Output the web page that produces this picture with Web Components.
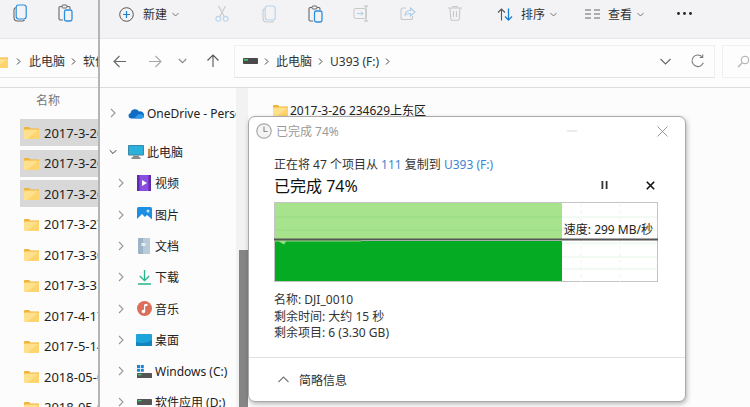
<!DOCTYPE html>
<html lang="zh">
<head>
<meta charset="utf-8">
<title>已完成 74%</title>
<style>
    html,body{margin:0;height:100%;overflow:hidden;background:#fbfbfb;}
    body{
        font-family:"Noto Sans","Noto Sans CJK SC",sans-serif;
        font-size:12px;
        color:#222;
    }
    .desk{position:relative;width:750px;height:407px;overflow:hidden;}
    back-window{position:absolute;left:0;top:0;}
    front-window{position:absolute;left:98px;top:0;}
    copy-dialog{position:absolute;left:248px;top:116px;}
</style>
</head>
<body>
<div class="desk">
    <back-window></back-window>
    <front-window></front-window>
    <copy-dialog></copy-dialog>
</div>

<script>
const ikonit={
    folder:`<svg width="15" height="13" viewBox="0 0 15 13"><path d="M0 2.200C0 1.500.5 1 1.200 1H5l1.500 1.500H15V5H0z" fill="#f2b436"/><rect y="3.400" width="15" height="9.600" rx=".8" fill="#ffe08c"/><path d="M15 3.400V13H3z" fill="#fbcb58" opacity=".6"/></svg>`,
    copy:`<svg width="14" height="18" viewBox="0 0 14 18" fill="none"><rect x="3.200" y="1" width="10" height="14" rx="2.400" stroke="#2a8fe0" stroke-width="1.200"/><path d="M2.600 3.500C1.500 4 1 4.800 1 6v7.500C1 15.600 2.400 17 4.500 17h5c.9 0 1.600-.4 2-1" stroke="#666" stroke-width="1.100"/></svg>`,
    copyPale:`<svg width="14" height="18" viewBox="0 0 14 18" fill="none"><rect x="3.200" y="1" width="10" height="14" rx="2.400" stroke="#b9d6ee" stroke-width="1.200"/><path d="M2.600 3.500C1.500 4 1 4.800 1 6v7.500C1 15.600 2.400 17 4.500 17h5c.9 0 1.600-.4 2-1" stroke="#c8c8c8" stroke-width="1.100"/></svg>`,
    paste:`<svg width="15" height="18" viewBox="0 0 15 18" fill="none"><path d="M4 2.500H2.200C1.500 2.500 1 3 1 3.700v11.100c0 .7.500 1.200 1.200 1.200H5" stroke="#666" stroke-width="1.100"/><path d="M9 2.500h1.800c.7 0 1.200.5 1.200 1.200V5" stroke="#666" stroke-width="1.100"/><rect x="4" y="1" width="5" height="3" rx="1" stroke="#666"/><rect x="6.500" y="6" width="7.500" height="11" rx="1.800" stroke="#2a8fe0" stroke-width="1.300"/></svg>`,
    plus:`<svg width="15" height="15" viewBox="0 0 15 15" fill="none"><circle cx="7.500" cy="7.500" r="6.800" stroke="#555" stroke-width="1"/><path d="M7.500 4v7M4 7.500h7" stroke="#1b7fd4" stroke-width="1.200"/></svg>`,
    cut:`<svg width="14" height="17" viewBox="0 0 14 17" fill="none"><path d="M3.500 1l6 11M10.500 1l-6 11" stroke="#c8c8c8" stroke-width="1.100"/><circle cx="3.300" cy="13.800" r="2.400" stroke="#b9d6ee" stroke-width="1.100"/><circle cx="10.700" cy="13.800" r="2.400" stroke="#b9d6ee" stroke-width="1.100"/></svg>`,
    rename:`<svg width="17" height="17" viewBox="0 0 17 17" fill="none"><rect x="1" y="3.500" width="12" height="10" rx="1.500" stroke="#c8c8c8"/><path d="M4 8.500h6M8 6.500l2 2-2 2" stroke="#a9cdea"/><path d="M13 1v15M11 1h4M11 16h4" stroke="#c0c0c0"/></svg>`,
    share:`<svg width="16" height="16" viewBox="0 0 16 16" fill="none"><path d="M6 3H3C1.800 3 1 3.800 1 5v7.500C1 13.800 1.800 14.500 3 14.500h7.500c1.200 0 2-.8 2-2V11" stroke="#c8c8c8" stroke-width="1.100"/><path d="M5 10c.5-3 2.500-4.500 5.500-4.500V3L15 7l-4.500 4V8.500C8.500 8.500 6.500 9 5 10z" stroke="#a9cdea" stroke-width="1.100"/></svg>`,
    trash:`<svg width="14" height="16" viewBox="0 0 14 16" fill="none"><path d="M0 3h14M5 3V1.500h4V3M2 3l.8 11c0 .7.500 1.200 1.200 1.200h6c.7 0 1.200-.5 1.200-1.200L12 3M5.500 6v6M8.500 6v6" stroke="#c8c8c8" stroke-width="1.100"/></svg>`,
    sort:`<svg width="16" height="13" viewBox="0 0 16 13" fill="none"><path d="M4.500 12.500V1M1 4.500L4.500 1 8 4.500" stroke="#555" stroke-width="1.100"/><path d="M11.500.5V12M8 8.500L11.500 12 15 8.500" stroke="#1b7fd4" stroke-width="1.300"/></svg>`,
    view:`<svg width="15" height="10" viewBox="0 0 15 10" fill="none"><path d="M0 1h6M0 5h6M0 9h6M9 1h6M9 5h6M9 9h6" stroke="#666" stroke-width="1.100"/></svg>`,
    dots:`<svg width="15" height="3" viewBox="0 0 15 3" fill="#222"><circle cx="1.500" cy="1.500" r="1.400"/><circle cx="7.500" cy="1.500" r="1.400"/><circle cx="13.500" cy="1.500" r="1.400"/></svg>`,
    down:`<svg width="7" height="5" viewBox="0 0 7 5" fill="none"><path d="M.5 1l3 3 3-3" stroke="#777"/></svg>`,
    left:`<svg width="14" height="13" viewBox="0 0 14 13" fill="none"><path d="M13 6.500H1M6.500 1L1 6.500 6.500 12" stroke="#666" stroke-width="1.100"/></svg>`,
    right:`<svg width="14" height="13" viewBox="0 0 14 13" fill="none"><path d="M1 6.500h12M7.500 1L13 6.500 7.500 12" stroke="#a8a8a8" stroke-width="1.100"/></svg>`,
    up:`<svg width="14" height="14" viewBox="0 0 14 14" fill="none"><path d="M7 13V1M1.500 6.500L7 1l5.500 5.500" stroke="#555" stroke-width="1.100"/></svg>`,
    drive:`<svg width="15" height="6" viewBox="0 0 15 6"><rect width="15" height="6" rx=".8" fill="#4a4a4a"/><rect x="1" y="1" width="4" height="1.600" fill="#44c86a"/></svg>`,
    sep:`<svg width="5" height="7" viewBox="0 0 5 7" fill="none"><path d="M1 .5l3 3-3 3" stroke="#444"/></svg>`,
    chevR:`<svg width="6" height="10" viewBox="0 0 6 10" fill="none"><path d="M1 1l4 4-4 4" stroke="#999" stroke-width="1.100"/></svg>`,
    chevD:`<svg width="9" height="6" viewBox="0 0 9 6" fill="none"><path d="M.8 1l3.700 3.700L8.200 1" stroke="#333" stroke-width="1.100"/></svg>`,
    chevDPale:`<svg width="9" height="6" viewBox="0 0 9 6" fill="none"><path d="M.8 1l3.700 3.700L8.200 1" stroke="#888" stroke-width="1.100"/></svg>`,
    chevDBig:`<svg width="11" height="7" viewBox="0 0 11 7" fill="none"><path d="M.5 1l5 5 5-5" stroke="#666" stroke-width="1.100"/></svg>`,
    refresh:`<svg width="14" height="14" viewBox="0 0 14 14" fill="none"><path d="M12.300 8.800A5.800 5.800 0 1 1 11 2.700" stroke="#777" stroke-width="1.100"/><path d="M11.700.5v3h-3" stroke="#777" stroke-width="1.100"/></svg>`,
    search:`<svg width="13" height="13" viewBox="0 0 13 13" fill="none"><circle cx="8" cy="5" r="3.800" stroke="#aaa"/><path d="M5.200 7.800L1 12" stroke="#aaa" stroke-width="1.100"/></svg>`,
    cloud:`<svg width="16" height="11" viewBox="0 0 16 11"><path d="M3 10.500a2.800 2.800 0 0 1-.4-5.500A4.500 4.500 0 0 1 11 3.500a3.500 3.500 0 0 1 2.500 7z" fill="#0f6cc4"/><path d="M6 10.500L10 6.500c2-1.200 5.500-.5 5.800 2 .1 1-.6 2-2 2z" fill="#2f9be8"/></svg>`,
    pc:`<svg width="16" height="14" viewBox="0 0 16 14"><rect width="16" height="10.500" rx="1" fill="#3d7f99"/><rect x=".8" y=".8" width="14.400" height="8.800" fill="#2ab0da"/><rect x="5" y="10.500" width="6" height="2" fill="#8a8a8a"/><rect x="3.500" y="12.500" width="9" height="1.200" fill="#555"/></svg>`,
    video:`<svg width="14" height="16" viewBox="0 0 14 16"><rect width="14" height="16" rx="1.200" fill="#8a4fe0"/><path d="M0 0h2.500v16H0zM11.500 0H14v16h-2.500z" fill="#5e2cb0"/><path d="M5 5l5 3-5 3z" fill="#fff"/></svg>`,
    image:`<svg width="15" height="15" viewBox="0 0 15 15"><rect width="15" height="15" rx="1.500" fill="#1e8fe0"/><path d="M0 12l5-5 3 3 2-2 5 4.500V15H0z" fill="#fff"/><circle cx="11" cy="4" r="1.500" fill="#bfe3fa"/></svg>`,
    doc:`<svg width="12" height="16" viewBox="0 0 12 16"><rect width="12" height="16" rx=".8" fill="#9db4c8"/><path d="M5 0h7v16H5z" fill="#b9cbd9"/><rect x="3.500" y="5" width="4" height="3" fill="#e7eef4"/></svg>`,
    download:`<svg width="13" height="15" viewBox="0 0 13 15" fill="none"><path d="M6.500 0v10.500M1.800 6L6.500 10.700 11.200 6" stroke="#26b58c" stroke-width="1.300"/><path d="M0 14h13" stroke="#26b58c" stroke-width="1.500"/></svg>`,
    music:`<svg width="15" height="15" viewBox="0 0 15 15"><circle cx="7.500" cy="7.500" r="7.500" fill="#dc6f5c"/><path d="M7 3.500l3.500-.8v2l-2.300.6V10.500a1.800 1.800 0 1 1-1.200-1.700z" fill="#fff"/></svg>`,
    desktop:`<svg width="16" height="12" viewBox="0 0 16 12"><rect width="16" height="12" rx="1" fill="#1fa3db"/><path d="M0 8c5 1.500 11 1.500 16-2v5a1 1 0 0 1-1 1H1a1 1 0 0 1-1-1z" fill="#1484bd"/></svg>`,
    windows:`<svg width="15" height="13" viewBox="0 0 15 13"><path d="M0 0h3v3H0zM3.800 0h3v3h-3zM0 3.800h3v3H0zM3.800 3.800h3v3h-3z" fill="#1a86d8"/><rect y="8" width="15" height="5" rx=".6" fill="#555"/><rect x="1" y="9" width="3.500" height="1.300" fill="#44c86a"/></svg>`,
    disk:`<svg width="15" height="6" viewBox="0 0 15 6"><rect width="15" height="6" rx=".8" fill="#555"/><rect x="1" y="1" width="3.500" height="1.300" fill="#44c86a"/></svg>`,
    clock:`<svg width="16" height="16" viewBox="0 0 16 16" fill="none"><circle cx="8" cy="8" r="7.200" fill="#f4f4f4" stroke="#a8a8a8" stroke-width="1.200"/><path d="M8 3.500V8.500H11.500" stroke="#8a8a8a" stroke-width="1.100"/></svg>`,
    minimize:`<svg width="10" height="2" viewBox="0 0 10 2"><path d="M0 1h10" stroke="#d8d8d8"/></svg>`,
    close:`<svg width="11" height="11" viewBox="0 0 11 11" fill="none"><path d="M.5.500l10 10M10.500.500l-10 10" stroke="#999"/></svg>`,
    pause:`<svg width="7" height="8" viewBox="0 0 7 8" fill="#333"><rect x=".5" width="1.800" height="8"/><rect x="4.700" width="1.800" height="8"/></svg>`,
    stop:`<svg width="9" height="9" viewBox="0 0 9 9" fill="none"><path d="M.8.800l7.400 7.400M8.200.800L.8 8.200" stroke="#111" stroke-width="1.600"/></svg>`,
    chevU:`<svg width="11" height="7" viewBox="0 0 11 7" fill="none"><path d="M.5 6l5-5 5 5" stroke="#777" stroke-width="1.100"/></svg>`
};

class AppIcon extends HTMLElement{
    static get observedAttributes(){
        return ['name'];
    }
    constructor(){
        super();
        this.attachShadow({mode:'open'});
    }
    attributeChangedCallback(attribuutti,vanha,uusi){
        this.shadowRoot.innerHTML=`<style>:host{display:inline-flex;align-items:center;justify-content:center;flex:none;}svg{display:block;}</style>${ikonit[uusi]||''}`;
    }
}
customElements.define('app-icon',AppIcon);

const nappiTemplate=document.createElement('template');
nappiTemplate.innerHTML=`
<style>
    :host{display:inline-flex;align-items:center;justify-content:center;flex:none;white-space:nowrap;color:#333;}
    .teksti{margin-left:var(--vali,9px);}
    .nuoli{margin-left:5px;}
</style>
<app-icon id="kuva"></app-icon><span class="teksti" id="teksti"><slot></slot></span><app-icon class="nuoli" id="nuoli" name="down"></app-icon>
`;
class ToolButton extends HTMLElement{
    connectedCallback(){
        if(this.shadowRoot) return;
        const juuri=this.attachShadow({mode:'open'});
        juuri.appendChild(nappiTemplate.content.cloneNode(true));
        juuri.getElementById('kuva').setAttribute('name',this.getAttribute('icon'));
        if(!this.hasAttribute('menu')) juuri.getElementById('nuoli').remove();
        if(!this.textContent.trim()) juuri.getElementById('teksti').remove();
    }
}

const polkuTemplate=document.createElement('template');
polkuTemplate.innerHTML=`
<style>
    :host{display:inline-flex;align-items:center;gap:6px;margin-right:7px;white-space:nowrap;color:#333;}
</style>
<slot></slot><app-icon name="sep"></app-icon>
`;
class PathCrumb extends HTMLElement{
    connectedCallback(){
        if(this.shadowRoot) return;
        this.attachShadow({mode:'open'}).appendChild(polkuTemplate.content.cloneNode(true));
    }
}

const tiedostoTemplate=document.createElement('template');
tiedostoTemplate.innerHTML=`
<style>
    :host{display:flex;align-items:center;height:27px;margin-bottom:3.500px;padding-left:4px;white-space:nowrap;font-size:13px;color:#222;}
    :host([selected]){background:#d8d8d8;}
    app-icon{margin-right:5px;}
</style>
<app-icon name="folder"></app-icon><slot></slot>
`;
class FileRow extends HTMLElement{
    connectedCallback(){
        if(this.shadowRoot) return;
        this.attachShadow({mode:'open'}).appendChild(tiedostoTemplate.content.cloneNode(true));
    }
}

const navTemplate=document.createElement('template');
navTemplate.innerHTML=`
<style>
    :host{display:flex;align-items:center;height:31.300px;padding-left:9px;white-space:nowrap;color:#222;}
    :host([depth="1"]){padding-left:17px;}
    .nuoli{width:8px;}
    .kuva{width:16px;margin:0 3px 0 11px;}
</style>
<app-icon class="nuoli" id="nuoli"></app-icon><app-icon class="kuva" id="kuva"></app-icon><slot></slot>
`;
class NavItem extends HTMLElement{
    connectedCallback(){
        if(this.shadowRoot) return;
        const juuri=this.attachShadow({mode:'open'});
        juuri.appendChild(navTemplate.content.cloneNode(true));
        juuri.getElementById('nuoli').setAttribute('name',this.hasAttribute('open')?'chevD':'chevR');
        juuri.getElementById('kuva').setAttribute('name',this.getAttribute('icon'));
    }
}

const takaTemplate=document.createElement('template');
takaTemplate.innerHTML=`
<style>
    :host{display:block;width:98px;height:407px;overflow:hidden;background:#fcfcfc;}
    .tools{display:flex;align-items:flex-start;gap:31px;box-sizing:border-box;height:39px;padding:4px 0 0 13px;background:#f3f2f5;border-bottom:1px solid #e6e6e6;}
    .row{box-sizing:border-box;height:49px;padding-top:6px;border-bottom:1px solid #ddd;}
    .path{display:flex;align-items:center;box-sizing:border-box;height:33px;border-bottom:1px solid #e6e6e6;margin-left:-7px;white-space:nowrap;overflow:hidden;}
    .path .dir{margin-right:8px;}
    .path .sep{margin-right:8px;}
    .head{height:26px;padding:0 0 0 36px;line-height:26px;color:#777;box-sizing:border-box;}
    .rows{margin:5px 0 0 20px;overflow:hidden;}
</style>
<div class="tools">
    <tool-button icon="copy"></tool-button>
    <tool-button icon="paste"></tool-button>
</div>
<div class="row"><div class="path">
    <app-icon class="dir" name="folder"></app-icon><app-icon class="sep" name="sep"></app-icon><path-crumb>此电脑</path-crumb><path-crumb>软件</path-crumb>
</div></div>
<div class="head">名称</div>
<div class="rows">
    <file-row selected>2017-3-26 23</file-row>
    <file-row selected>2017-3-26 23</file-row>
    <file-row selected>2017-3-26 23</file-row>
    <file-row>2017-3-27 10</file-row>
    <file-row>2017-3-30 10</file-row>
    <file-row>2017-3-31 10</file-row>
    <file-row>2017-4-17 10</file-row>
    <file-row>2017-5-14 10</file-row>
    <file-row>2018-05-06 1</file-row>
    <file-row>2018-05-07 1</file-row>
</div>
`;
class BackWindow extends HTMLElement{
    constructor(){
        super();
        this.attachShadow({mode:'open'}).appendChild(takaTemplate.content.cloneNode(true));
    }
}

const etuTemplate=document.createElement('template');
etuTemplate.innerHTML=`
<style>
    :host{display:flex;flex-direction:column;box-sizing:border-box;width:652px;height:407px;border-left:2px solid #b4b4b4;background:#fcfcfc;overflow:hidden;}
    .tools{display:flex;align-items:flex-start;box-sizing:border-box;height:39px;flex:none;padding:5px 0 0 19px;background:#f3f2f5;border-bottom:1px solid #e6e6e6;}
    .tools .new{margin-right:19.700px;}
    .tools .ico{width:46.600px;}
    .tools .sort{margin:0 28px 0 18.700px;--vali:8px;}
    .tools .view{margin-right:33px;--vali:8px;}
    .tools .dots{margin-top:7px;}
    .address{display:flex;align-items:center;box-sizing:border-box;height:49px;flex:none;padding:0 0 4px 13px;border-bottom:1px solid #dcdcdc;background:#fdfdfd;}
    .fwd{margin-left:21px;}
    .more{margin:0 19px 0 16px;}
    .pathbox{display:flex;align-items:center;box-sizing:border-box;width:481px;height:33px;margin-left:14px;padding:0 9px 0 8px;border:1px solid #f0f0f0;border-bottom-color:#e2e2e2;}
    .pathbox .fill{flex:1;}
    .pathbox .ref{margin-left:20px;}
    .search{flex:1;height:33px;box-sizing:border-box;margin-left:7px;padding-left:14px;display:flex;align-items:center;border:1px solid #f0f0f0;border-right:0;}
    .body{display:flex;flex:1;min-height:0;}
    nav{width:136px;flex:none;padding-top:9.400px;overflow:hidden;}
    nav .pc{margin-top:7.700px;}
    .scroll{position:relative;width:12px;flex:none;background:#f2f2f2;}
    .scroll i{position:absolute;left:3px;right:0;top:162px;bottom:0;background:#858585;}
    .content{flex:1;padding:13px 0 0 25px;}
    .first{display:flex;align-items:center;gap:2px;height:18px;white-space:nowrap;color:#222;}
</style>
<div class="tools">
    <tool-button class="new" icon="plus" menu>新建</tool-button>
    <tool-button class="ico" icon="cut"></tool-button>
    <tool-button class="ico" icon="copyPale"></tool-button>
    <tool-button class="ico" icon="paste"></tool-button>
    <tool-button class="ico" icon="rename"></tool-button>
    <tool-button class="ico" icon="share"></tool-button>
    <tool-button class="ico" icon="trash"></tool-button>
    <tool-button class="sort" icon="sort" menu>排序</tool-button>
    <tool-button class="view" icon="view" menu>查看</tool-button>
    <tool-button class="dots" icon="dots"></tool-button>
</div>
<div class="address">
    <app-icon name="left"></app-icon>
    <app-icon class="fwd" name="right"></app-icon>
    <app-icon class="more" name="chevDPale"></app-icon>
    <app-icon name="up"></app-icon>
    <div class="pathbox">
        <path-crumb><app-icon name="drive"></app-icon></path-crumb>
        <path-crumb>此电脑</path-crumb>
        <path-crumb>U393 (F:)</path-crumb>
        <span class="fill"></span>
        <app-icon name="chevDBig"></app-icon>
        <app-icon class="ref" name="refresh"></app-icon>
    </div>
    <div class="search"><app-icon name="search"></app-icon></div>
</div>
<div class="body">
    <nav>
        <nav-item icon="cloud">OneDrive - Personal</nav-item>
        <nav-item class="pc" icon="pc" open>此电脑</nav-item>
        <nav-item depth="1" icon="video">视频</nav-item>
        <nav-item depth="1" icon="image">图片</nav-item>
        <nav-item depth="1" icon="doc">文档</nav-item>
        <nav-item depth="1" icon="download">下载</nav-item>
        <nav-item depth="1" icon="music">音乐</nav-item>
        <nav-item depth="1" icon="desktop">桌面</nav-item>
        <nav-item depth="1" icon="windows">Windows (C:)</nav-item>
        <nav-item depth="1" icon="disk">软件应用 (D:)</nav-item>
    </nav>
    <div class="scroll"><i></i></div>
    <div class="content">
        <div class="first"><app-icon name="folder"></app-icon><span>2017-3-26 234629上东区</span></div>
    </div>
</div>
`;
class FrontWindow extends HTMLElement{
    constructor(){
        super();
        this.attachShadow({mode:'open'}).appendChild(etuTemplate.content.cloneNode(true));
    }
}

const kaavioTemplate=document.createElement('template');
kaavioTemplate.innerHTML=`
<style>
    :host{display:block;position:relative;width:384px;height:80px;}
    svg{display:block;}
    .nopeus{position:absolute;right:5px;top:19px;line-height:18px;white-space:nowrap;color:#222;}
</style>
<svg width="384" height="80" viewBox="0 0 384 80">
    <rect x=".5" y=".5" width="383" height="79" fill="#fff" stroke="#c4c4c4"/>
    <path d="M1 15h382M1 28h382M1 41h382M1 55h382M1 67h382" stroke="#e4f5e6"/>
    <path d="M307 2v78M346 2v78" stroke="#f1f1f1" stroke-dasharray="3 4"/>
    <rect x="1" y="1" width="287" height="36" fill="#a6e38c"/>
    <path d="M1 15h287M1 28h287" stroke="#98db82"/>
    <path d="M1 39h287v40H1z" fill="#06ab24"/>
    <path d="M1 38h86v1.500H30L12 39.500 10 42.500 5 39.500H1z" fill="#9ade84"/>
    <rect x="0" y="36.500" width="384" height="2" fill="#555"/>
</svg>
<span class="nopeus">速度: 299 MB/秒</span>
`;
class SpeedGraph extends HTMLElement{
    constructor(){
        super();
        this.attachShadow({mode:'open'}).appendChild(kaavioTemplate.content.cloneNode(true));
    }
}

const dialogiTemplate=document.createElement('template');
dialogiTemplate.innerHTML=`
<style>
    :host{display:flex;flex-direction:column;box-sizing:border-box;width:438px;height:286px;border:1px solid #a9a9a9;border-radius:7px;background:#fff;box-shadow:1px 2px 5px rgba(0,0,0,.28);}
    .title{display:flex;align-items:center;height:28px;padding:0 17px 0 7px;color:#9a9a9a;flex:none;}
    .title span{margin-left:4px;flex:1;}
    .title .min{margin-right:80px;}
    .main{padding:11px 25px 0;flex:1;}
    .from{height:18px;line-height:18px;color:#333;white-space:nowrap;}
    .from a{color:#3d86d0;text-decoration:none;}
    .percent{display:flex;align-items:center;height:22px;font-size:16px;color:#111;}
    .percent span{flex:1;}
    .percent .stop{margin:0 5px 0 38px;}
    speed-graph{margin-top:6px;}
    .info{margin-top:10px;line-height:16.500px;color:#333;}
    .foot{display:flex;align-items:center;height:43px;flex:none;padding-left:29px;gap:10px;border-top:1px solid #e2e2e2;color:#333;}
</style>
<div class="title">
    <app-icon name="clock"></app-icon><span>已完成 74%</span>
    <app-icon class="min" name="minimize"></app-icon>
    <app-icon name="close"></app-icon>
</div>
<div class="main">
    <div class="from">正在将 47 个项目从 <a>111</a> 复制到 <a>U393 (F:)</a></div>
    <div class="percent"><span>已完成 74%</span><app-icon name="pause"></app-icon><app-icon class="stop" name="stop"></app-icon></div>
    <speed-graph></speed-graph>
    <div class="info">
        <div>名称: DJI_0010</div>
        <div>剩余时间: 大约 15 秒</div>
        <div>剩余项目: 6 (3.30 GB)</div>
    </div>
</div>
<div class="foot"><app-icon name="chevU"></app-icon>简略信息</div>
`;
class CopyDialog extends HTMLElement{
    constructor(){
        super();
        this.attachShadow({mode:'open'}).appendChild(dialogiTemplate.content.cloneNode(true));
    }
}

customElements.define('tool-button',ToolButton);
customElements.define('path-crumb',PathCrumb);
customElements.define('file-row',FileRow);
customElements.define('nav-item',NavItem);
customElements.define('speed-graph',SpeedGraph);
customElements.define('back-window',BackWindow);
customElements.define('front-window',FrontWindow);
customElements.define('copy-dialog',CopyDialog);
</script>
</body>
</html>
